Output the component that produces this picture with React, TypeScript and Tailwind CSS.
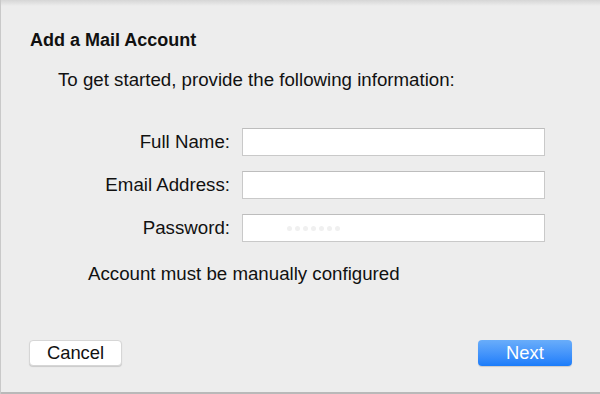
export default function App() {
  return (
    <div className="w-[600px] h-[394px] bg-[#ededed] relative overflow-hidden font-['Liberation_Sans',Arial,sans-serif] text-[#111]">
      {/* window chrome edges */}
      <div className="absolute top-0 left-0 right-0 h-[6px] bg-gradient-to-b from-[#d6d6d6] to-[#ededed]" />
      <div className="absolute bottom-0 left-0 right-0 h-[2px] bg-[#b9b9b9]" />
      <div className="absolute top-0 bottom-0 left-0 w-px bg-[#c9c9c9]" />

      <div className="flex flex-col pt-[29px] h-full">
        <h1 className="pl-[30px] text-[18px] font-bold leading-[22px]">Add a Mail Account</h1>
        <p className="pl-[58px] mt-[18px] text-[18.7px] leading-[22px]">
          To get started, provide the following information:
        </p>

        <div className="mt-[37px] grid grid-cols-[230px_303px] gap-x-[12px] gap-y-[15px] items-center">
          <label className="text-right text-[18.7px] leading-[22px]">Full Name:</label>
          <div className="h-[28px] bg-white border border-[#c9c9c9] border-t-[#bdbdbd]" />
          <label className="text-right text-[18.7px] leading-[22px]">Email Address:</label>
          <div className="h-[28px] bg-white border border-[#c9c9c9] border-t-[#bdbdbd]" />
          <label className="text-right text-[18.7px] leading-[22px]">Password:</label>
          <div className="h-[28px] bg-white border border-[#c9c9c9] border-t-[#bdbdbd] flex items-center pl-[44px] gap-[3px]">
            {[0, 1, 2, 3, 4, 5, 6].map((i) => (
              <span key={i} className="w-[5px] h-[5px] rounded-full bg-[#f0f0f0]" />
            ))}
          </div>
        </div>

        <p className="pl-[88px] mt-[21px] text-[18.7px] leading-[22px]">Account must be manually configured</p>

        <div className="mt-auto mb-[28px] flex justify-between pl-[29px] pr-[28px]">
          <button className="w-[93px] h-[26px] bg-white rounded-[4px] border border-[#d6d6d6] shadow-[0_1px_1px_rgba(0,0,0,0.15)] text-[18.4px] leading-[22px] text-[#111]">
            Cancel
          </button>
          <button className="w-[94px] h-[26px] rounded-[4px] bg-gradient-to-b from-[#69adfa] to-[#1a7cfa] text-[18.4px] leading-[22px] text-white shadow-[0_1px_1px_rgba(0,0,0,0.15)]">
            Next
          </button>
        </div>
      </div>
    </div>
  )
}
